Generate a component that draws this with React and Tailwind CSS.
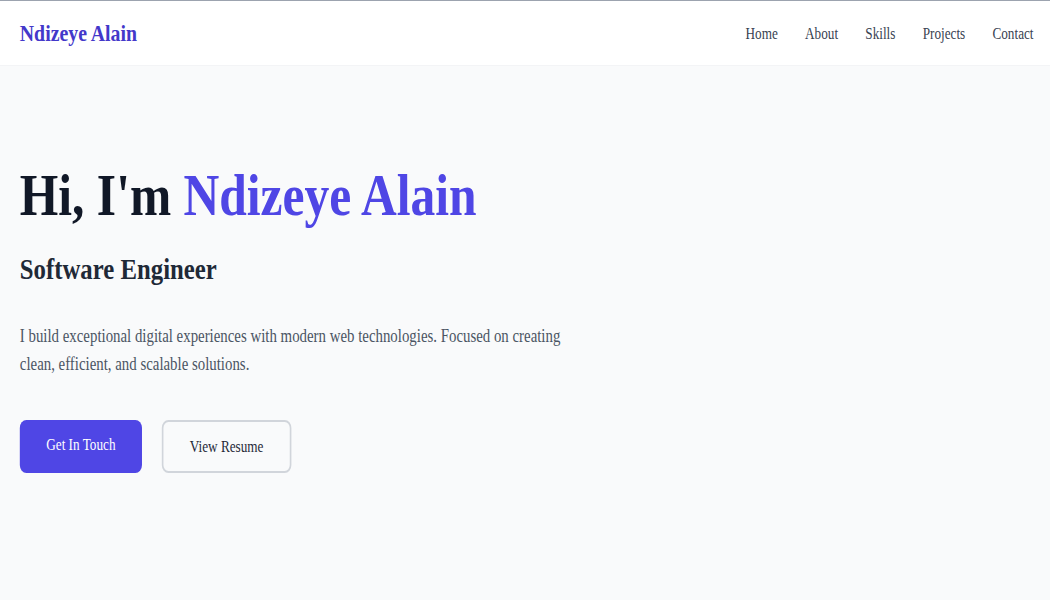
import React from "react";

export default function App() {
  const links = ["Home", "About", "Skills", "Projects", "Contact"];
  return (
    <div className="w-[1050px] h-[600px] overflow-hidden bg-[#f9fafb] border-t border-[#9ca3af] font-['Liberation_Serif',serif]">
      <div className="w-[1272px] origin-top-left scale-x-[0.8255]">
        <nav className="h-[65px] flex items-center justify-between pl-6 pr-5 bg-white border-b border-[#f3f4f6]">
          <a className="text-2xl font-bold text-[#4338ca]">Ndizeye Alain</a>
          <ul className="flex items-center gap-[33px] pt-[2px] text-base text-[#374151]">
            {links.map((l) => (
              <li key={l}>{l}</li>
            ))}
          </ul>
        </nav>
        <section className="pl-6 pt-[99px]">
          <h1 className="text-6xl leading-none font-bold text-[#111827]">
            Hi, I'm <span className="text-[#4f46e5]">Ndizeye Alain</span>
          </h1>
          <h2 className="mt-[26px] text-3xl font-bold text-[#1f2937]">Software Engineer</h2>
          <p className="mt-[35px] max-w-2xl text-lg text-[#4b5563]">
            I build exceptional digital experiences with modern web technologies. Focused on creating
            clean, efficient, and scalable solutions.
          </p>
          <div className="mt-[42px] flex gap-6">
            <button className="h-[53px] px-8 pb-1 flex items-center justify-center rounded-lg bg-[#4f46e5] text-white text-base">
              Get In Touch
            </button>
            <button className="h-[53px] px-8 flex items-center justify-center rounded-lg border-2 border-[#d1d5db] text-[#1f2937] text-base">
              View Resume
            </button>
          </div>
        </section>
      </div>
    </div>
  );
}
